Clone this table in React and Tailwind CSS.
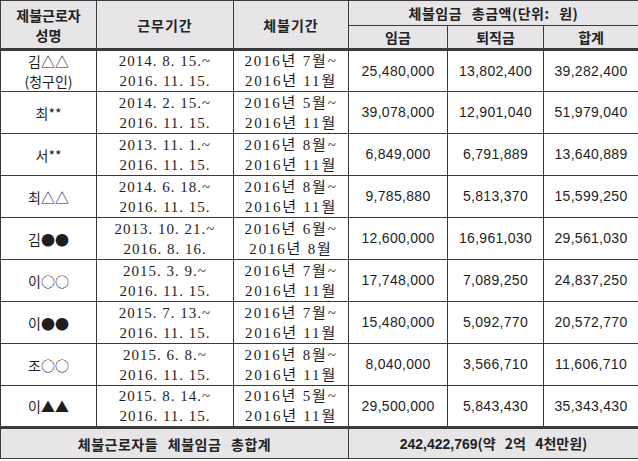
const rows = [
  { name: ["김△△", "(청구인)"], work: ["2014. 8. 15.~", "2016. 11. 15."], unpaid: ["2016년 7월~", "2016년 11월"], wage: "25,480,000", sev: "13,802,400", total: "39,282,400" },
  { name: ["최**"], work: ["2014. 2. 15.~", "2016. 11. 15."], unpaid: ["2016년 5월~", "2016년 11월"], wage: "39,078,000", sev: "12,901,040", total: "51,979,040" },
  { name: ["서**"], work: ["2013. 11. 1.~", "2016. 11. 15."], unpaid: ["2016년 8월~", "2016년 11월"], wage: "6,849,000", sev: "6,791,889", total: "13,640,889" },
  { name: ["최△△"], work: ["2014. 6. 18.~", "2016. 11. 15."], unpaid: ["2016년 8월~", "2016년 11월"], wage: "9,785,880", sev: "5,813,370", total: "15,599,250" },
  { name: ["김●●"], work: ["2013. 10. 21.~", "2016. 8. 16."], unpaid: ["2016년 6월~", "2016년 8월"], wage: "12,600,000", sev: "16,961,030", total: "29,561,030" },
  { name: ["이○○"], work: ["2015. 3. 9.~", "2016. 11. 15."], unpaid: ["2016년 7월~", "2016년 11월"], wage: "17,748,000", sev: "7,089,250", total: "24,837,250" },
  { name: ["이●●"], work: ["2015. 7. 13.~", "2016. 11. 15."], unpaid: ["2016년 7월~", "2016년 11월"], wage: "15,480,000", sev: "5,092,770", total: "20,572,770" },
  { name: ["조○○"], work: ["2015. 6. 8.~", "2016. 11. 15."], unpaid: ["2016년 8월~", "2016년 11월"], wage: "8,040,000", sev: "3,566,710", total: "11,606,710" },
  { name: ["이▲▲"], work: ["2015. 8. 14.~", "2016. 11. 15."], unpaid: ["2016년 5월~", "2016년 11월"], wage: "29,500,000", sev: "5,843,430", total: "35,343,430" },
];

const sans = "font-['Noto_Sans_CJK_KR',sans-serif]";
const serif = "font-['Liberation_Serif','Noto_Sans_CJK_KR',serif]";
const num = "font-['Liberation_Sans','Noto_Sans_CJK_KR',sans-serif]";

const cell = "border border-[#3a3a3a] text-center align-middle p-0";
const head = `${cell} bg-[#e7e5e7] font-bold text-[14px] leading-[20px] text-[#222] ${sans}`;

// two stacked lines inside a cell
const Lines = ({ items }) => (
  <div className="flex flex-col items-center leading-[20px]">
    {items.map((t, i) => (
      <span key={i} className="whitespace-nowrap">{t}</span>
    ))}
  </div>
);

const App = () => {
  return (
    <div className="w-[638px] h-[461px] bg-white overflow-hidden">
      <table className="w-[638px] table-fixed border-collapse text-[#1e1e1e]">
        <colgroup>
          <col className="w-[96px]" />
          <col className="w-[137px]" />
          <col className="w-[115px]" />
          <col className="w-[99px]" />
          <col className="w-[96px]" />
          <col className="w-[95px]" />
        </colgroup>
        <thead>
          <tr className="h-[25px]">
            <th rowSpan={2} className={`${head} border-b-[3px] border-b-double`}>
              제불근로자
              <br />
              성명
            </th>
            <th rowSpan={2} className={`${head} border-b-[3px] border-b-double tracking-[1px]`}>근무기간</th>
            <th rowSpan={2} className={`${head} border-b-[3px] border-b-double tracking-[1px]`}>체불기간</th>
            <th colSpan={3} className={`${head} tracking-[0.5px] [word-spacing:6px]`}>체불임금 총금액(단위: 원)</th>
          </tr>
          <tr className="h-[24px]">
            <th className={`${head} border-b-[3px] border-b-double`}>임금</th>
            <th className={`${head} border-b-[3px] border-b-double`}>퇴직금</th>
            <th className={`${head} border-b-[3px] border-b-double`}>합계</th>
          </tr>
        </thead>
        <tbody>
          {rows.map((r, i) => (
            <tr key={i} className="h-[42px]">
              <td className={`${cell} text-[14px] ${sans}`}>
                <Lines items={r.name} />
              </td>
              <td className={`${cell} text-[15px] tracking-[1px] ${serif}`}>
                <Lines items={r.work} />
              </td>
              <td className={`${cell} text-[15px] tracking-[1.8px] ${serif}`}>
                <Lines items={r.unpaid} />
              </td>
              <td className={`${cell} text-[14px] tracking-[0.3px] ${num}`}>{r.wage}</td>
              <td className={`${cell} text-[14px] tracking-[0.3px] ${num}`}>{r.sev}</td>
              <td className={`${cell} text-[14px] tracking-[0.3px] ${num}`}>{r.total}</td>
            </tr>
          ))}
          <tr className="h-[31px]">
            <td colSpan={3} className={`${head} border-t-[3px] border-t-double tracking-[0.5px] [word-spacing:6px]`}>
              체불근로자들 체불임금 총합계
            </td>
            <td colSpan={3} className={`${head} border-t-[3px] border-t-double [word-spacing:6px]`}>
              <span className={num}>242,422,769</span>(약 2억 4천만원)
            </td>
          </tr>
        </tbody>
      </table>
    </div>
  );
};

export default App;
